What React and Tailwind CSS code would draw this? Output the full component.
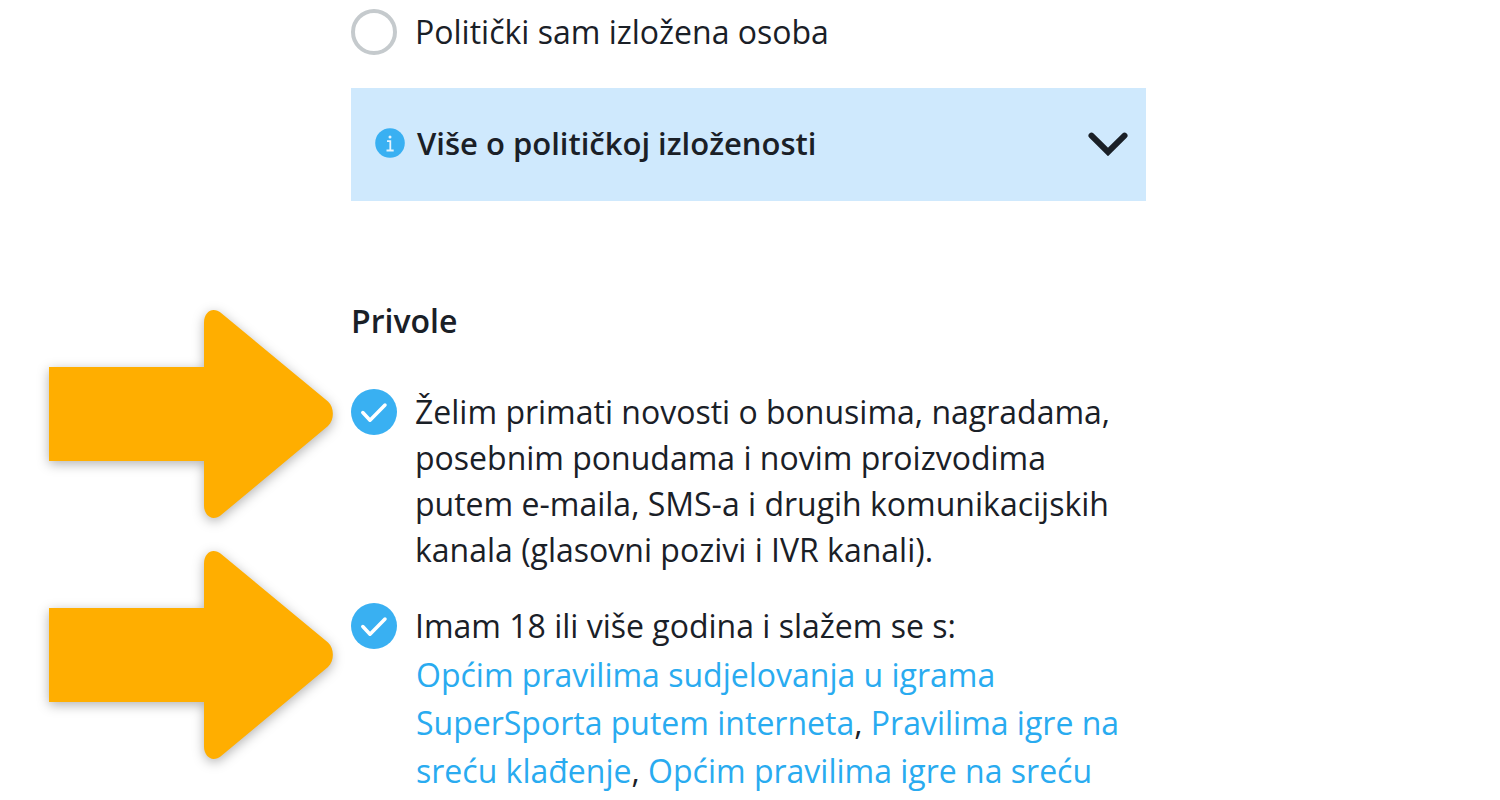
import { useState } from 'react';

const RULES = [
  'Općim pravilima sudjelovanja u igrama SuperSporta putem interneta',
  'Pravilima igre na sreću klađenje',
  'Općim pravilima igre na sreću',
];

function Arrow({ className }) {
  return (
    <svg
      viewBox="0 0 284 208"
      aria-hidden="true"
      className={`absolute w-[284px] h-[208px] overflow-visible drop-shadow-[0_3px_6px_rgba(0,0,0,0.3)] pointer-events-none ${className}`}>
      <path
        fill="#ffae00"
        d="M0 57H155V13C155 4 160 0 164.500 0C167.500 0 169.500 1 171.500 2.500L279 91.500C285.500 97.500 285.500 110 279 116L171.500 205.500C169.500 207 167.500 208 164.500 208C160 208 155 203 155 196V151H0Z"
      />
    </svg>
  );
}

function InfoIcon() {
  return (
    <svg viewBox="0 0 30 30" aria-hidden="true" className="w-[30px] h-[30px] shrink-0">
      <circle cx="15" cy="15" r="14.800" fill="#39b0f2" />
      <circle cx="15" cy="9" r="1.500" fill="#e4f4fe" />
      <path d="M12 13.200H15.300V22.500M11.500 22.500H18.700" fill="none" stroke="#e4f4fe" strokeWidth="1.800" />
    </svg>
  );
}

function Consent({ id, checked, onChange, label, children, arrow }) {
  return (
    <div className="relative">
      <Arrow className={arrow} />
      <div className="flex items-start gap-[18px]">
        <span className="grid shrink-0">
          <input
            id={id}
            type="checkbox"
            checked={checked}
            onChange={onChange}
            className="peer col-start-1 row-start-1 appearance-none w-[46px] h-[46px] rounded-full border-4 border-[#c5cacd] checked:border-0 checked:bg-[#39b0f2] cursor-pointer"
          />
          <svg
            viewBox="0 0 46 46"
            aria-hidden="true"
            className="col-start-1 row-start-1 w-[46px] h-[46px] pointer-events-none opacity-0 peer-checked:opacity-100">
            <path d="M11.800 23.500L19 31.200L34 16" fill="none" stroke="#fff" strokeWidth="3.500" strokeLinecap="round" strokeLinejoin="round" />
          </svg>
        </span>
        <label htmlFor={id} className="flex-1 pr-5 cursor-pointer">{label}</label>
      </div>
      {children}
    </div>
  );
}

export default function App() {
  const [exposed, setExposed] = useState(false);
  const [open, setOpen] = useState(false);
  const [news, setNews] = useState(true);
  const [adult, setAdult] = useState(true);

  return (
    <div className="bg-white overflow-x-hidden">
      <form className="mx-auto max-w-[798px] pr-[3px] pt-[9px] font-['Open_Sans',sans-serif] text-[32px] leading-[46px] text-[#1a2027]">
        <div className="flex items-start gap-[18px]">
          <input
            id="exposed"
            type="radio"
            checked={exposed}
            onChange={() => setExposed(true)}
            className="appearance-none shrink-0 w-[46px] h-[46px] rounded-full border-4 border-[#c5cacd] checked:border-[#39b0f2] cursor-pointer"
          />
          <label htmlFor="exposed" className="cursor-pointer">Politički sam izložena osoba</label>
        </div>

        {/* Info banner */}
        <button
          type="button"
          aria-expanded={open}
          onClick={() => setOpen(!open)}
          className="mt-[33px] flex w-full items-center gap-3 bg-[#cfe9fd] pt-8 pb-[35px] pl-6 pr-[18px] text-left text-[31px] font-semibold cursor-pointer">
          <InfoIcon />
          <span className="flex-1">Više o političkoj izloženosti</span>
          <svg viewBox="0 0 40 26" aria-hidden="true" className="w-[40px] h-[26px] shrink-0">
            <path d="M3.500 5.700L20 22L36.500 5.700" fill="none" stroke="#1a2027" strokeWidth="6" strokeLinecap="round" />
          </svg>
        </button>

        <h2 className="mt-[97px] text-[32px] font-semibold">Privole</h2>

        {/* Consents */}
        <div className="mt-[45px] flex flex-col gap-[30px]">
          <Consent
            id="news"
            checked={news}
            onChange={() => setNews(!news)}
            arrow="right-full mr-[18px] -top-[79px]"
            label="Želim primati novosti o bonusima, nagradama, posebnim ponudama i novim proizvodima putem e-maila, SMS-a i drugih komunikacijskih kanala (glasovni pozivi i IVR kanali)."
          />
          <Consent
            id="adult"
            checked={adult}
            onChange={() => setAdult(!adult)}
            arrow="right-full mr-[18px] -top-[52px]"
            label="Imam 18 ili više godina i slažem se s:">
            <p className="mt-0.5 pl-[65px] pr-5 leading-[48px]">
              {RULES.map((rule, i) => (
                <span key={rule}>
                  {i > 0 && ', '}
                  <a href="#" className="text-[#29abf0] hover:underline">{rule}</a>
                </span>
              ))}
            </p>
          </Consent>
        </div>
      </form>
    </div>
  );
}
